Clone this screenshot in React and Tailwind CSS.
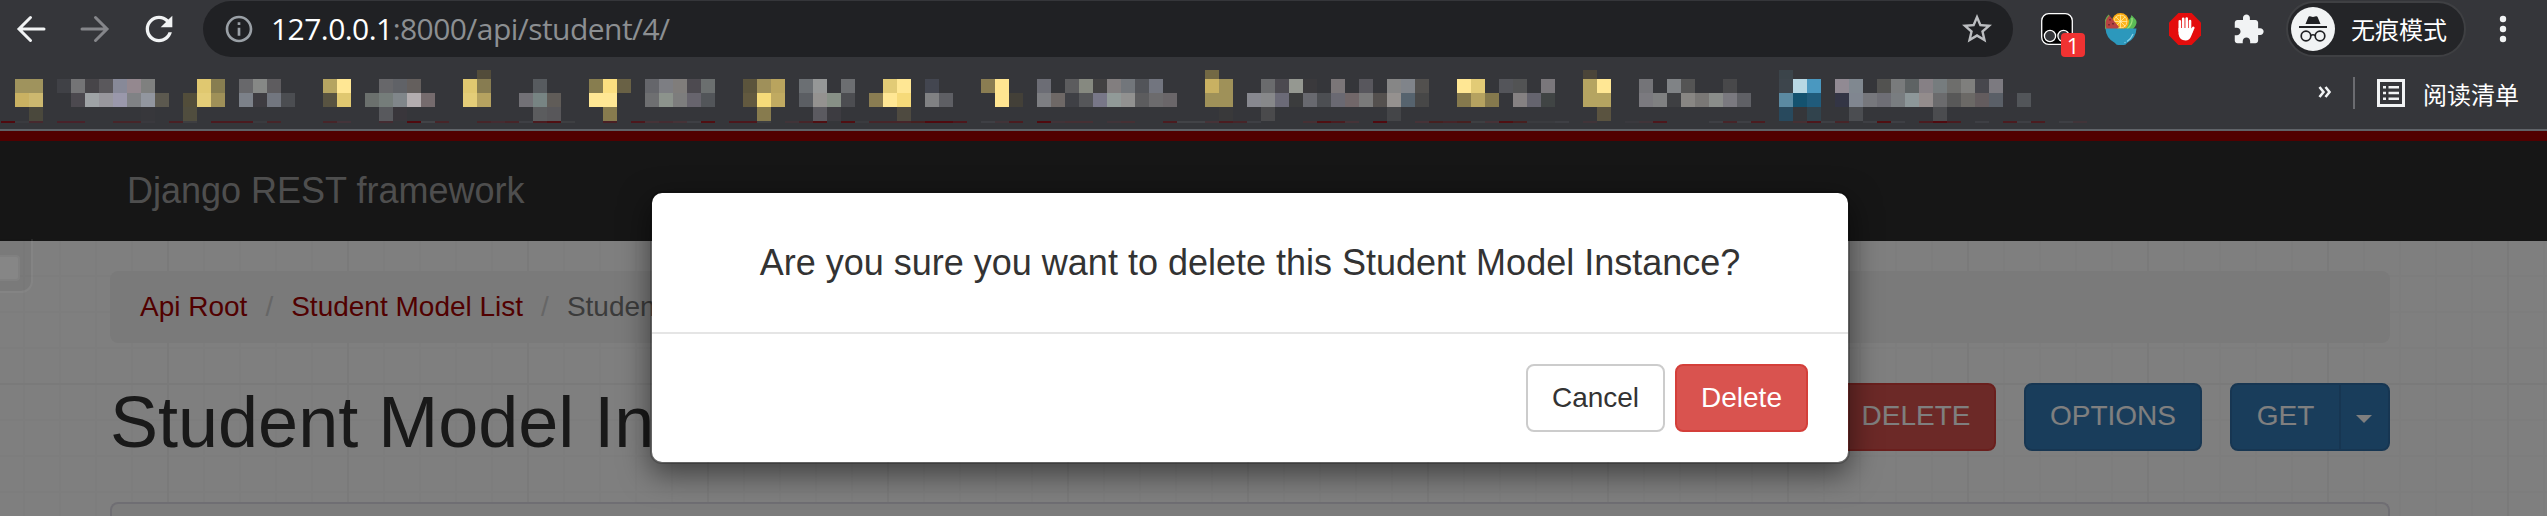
import React from "react";

const CELL = 14;

// Each row: [y, height, "index color color ... ; index color ..."] ("-" leaves a cell empty)
const MOSAIC = [
  [0, 9, "34 524c3a;86 736944;113 4b4539;127 3b444a"],
  [
    9,
    14,
    "1 9f935d 9f935d;4 404146 747476 474549 5a585c 878998 94888f 7f807f;14 e0c870 877d50;17 68686b 868886 5e5c5f;23 b5a461 ffe794;27 67676a 606267 645f5d;33 e0c870 877c51;38 575b5f;42 877d4f fbdf80 696145;46 65666b 7d7e83 807d7b 4d4a50 6b6f6f;53 5b543c 9f905a b9a45e;57 6b6f73 959797 - 6c6e71;63 e2cb76 ffe794 - 434650;70 8a7d52 ffe591;74 6c6d75 - 5c5c5e 868980 424142 827e7f 72767b 525459 72757f;86 c9b162 9f9159;90 6a6b6d 4c4a50 959891 3a393c - 7b7678 - 58575d - 868686 80848a 52504e;104 ffe794 e2cb76 - 54555a 525354 - 7a777b;113 b5a461 ffe794;117 747478 - 808386 545454;123 48484a;127 3d454c b8d8e4 4a98c0 - 918a93 808890 - 525250 797b7c 5e6364 868085 767c7e 6e6e6c 7f7f7d 47474d 7c7a80",
  ],
  [
    23,
    14,
    "1 c9b162 ccb86f;5 4c494f 9fa3a6 98979d 9a98ab 808285 92969f 5c594f;13 524d3a e4cd78 9f9058;17 7c8189 3e3c41 72767f 4b4d51;23 585341 e0c870;26 6b706d 757d7a 80868a b3adaf 756b6d;33 e4cd78 b5a260;37 727176 778483 605c58;42 ffe794 ffe794;46 6e6f71 8c938c 7d7d7d 67646d 525559;53 62593f f6db79 c0aa61;57 5b5e63 949290 879086 4c4d51;62 8a7d52 ffe794 f6da79 - 808183 5e5f64;71 ffe591 434038;74 7d7e82 6e6866 3f4045 555659 787788 919a98 919190 5c5c5e 6c6b6d 6a6669;86 9f9159 9f9159;89 87888f 87888a 6b6a77 3b3c3d 68696f 4c4e52 6a6972 716769 7a7a7a 54504e 95918f 56636e 474747;104 85794d b5a260 85794d - 858182 65646e 404444;113 b5a461 b5a461;117 7b7a7f 7f8081 3e3f42 888683 797775 8a8d8a 7a797f 5f6065;127 5b8aa2 14526f 205b7b - 333545 808690 76777c 6e6e75 797d80 8d9799 938c8c 6b6b6d 585858 6b6966 635c5e 5a5f67 36363b 525559",
  ],
  [
    37,
    14,
    "2 4a483c;10 37373b;13 504d3e;27 58595d 39363b;38 5b5c5e 58575a;43 877b4e;54 877b4e;58 5b5a60 3d3c41;64 4e4a40;87 39393a;90 4a4a4c;99 444548;114 5a5340;127 28495d - 31434d;132 4b4d51;138 4b4c4f",
  ],
  [
    51,
    2,
    "0 500a0f 3a3b3f 47292e - 49222a 49222a;8 472529 472529 3a393e;12 4a2024 3e3e41 - 4b1a1f 4b1a1f 4b1a1f 3a3b3f 472529;23 472529 44343a;27 452c32 - 500a0f 424347 472529;34 472529 452c32 472529 3e3f44 4b1c20 500f12 3e3f42;43 4a2024 - 4d171c 463338 452c32 463338 3e3f44 500f12;52 4d171c 4d171c 3e3f42 - 413439 472529 500f12 - 500f12 3a3b3f 472529 472529 472529 472020 500a0f 500a0f 4d171c;70 3e3f44 413439 4b1c20 - 500a0f 413439 463034 463034 - 413439 463034;83 4b1c20 424347 424347 463338 4b1c20 472529 3e3f44;93 463034 500f12 4b1c20 463338 - 500a0f;101 463338 472020 472529 472020 3e3f42 463338 500f12 472020 3a3b3f 3a3b3f 3e3f44 - 413439;116 3a393e 413439 4d171c;122 3e3f44 472529 3e3f44 4b1c20;128 463034 4d171c 3e3f44 472529 - 3e3f44 500f12 3e3f44 - 4b1c20 500a0f 4b1c20 - 3e3f44 - 4b1c20 3e3f44 4b1c20 - 3e3f44 413439",
  ],
];

function expand(spec) {
  return spec.split(";").flatMap((run) => {
    const [start, ...colors] = run.split(" ");
    return colors.map((c, i) => [Number(start) + i, c]).filter(([, c]) => c !== "-");
  });
}

function BlurredBookmarks() {
  return (
    <svg width="2100" height="53" className="ml-px mt-[13px] shrink-0" shapeRendering="crispEdges" aria-hidden="true">
      {MOSAIC.map(([y, h, spec]) =>
        expand(spec).map(([k, color]) => (
          <rect key={`${y}-${k}`} x={k * CELL} y={y} width={CELL} height={h} fill={`#${color}`} />
        ))
      )}
    </svg>
  );
}

function Icon({ d, size, className }) {
  return (
    <svg viewBox="0 0 24 24" width={size} height={size} fill="currentColor" className={`shrink-0 ${className || ""}`}>
      <path d={d} />
    </svg>
  );
}

const REFRESH =
  "M17.65 6.35C16.2 4.9 14.21 4 12 4c-4.42 0-7.99 3.58-7.99 8s3.57 8 7.99 8c3.73 0 6.84-2.55 7.73-6h-2.08c-.82 2.33-3.04 4-5.65 4-3.31 0-6-2.69-6-6s2.69-6 6-6c1.66 0 3.14.69 4.22 1.78L13 11h7V4l-2.35 2.35z";
const INFO =
  "M11 7h2v2h-2zm0 4h2v6h-2zm1-9C6.48 2 2 6.48 2 12s4.48 10 10 10 10-4.48 10-10S17.52 2 12 2zm0 18c-4.41 0-8-3.59-8-8s3.59-8 8-8 8 3.59 8 8-3.59 8-8 8z";
const STAR =
  "M22 9.24l-7.19-.62L12 2 9.19 8.63 2 9.24l5.46 4.73L5.82 21 12 17.27 18.18 21l-1.63-7.03L22 9.24zM12 15.4l-3.76 2.27 1-4.28-3.32-2.88 4.38-.38L12 6.1l1.71 4.04 4.38.38-3.32 2.88 1 4.28L12 15.4z";
const PUZZLE =
  "M20.5 11H19V7c0-1.1-.9-2-2-2h-4V3.5C13 2.12 11.88 1 10.5 1S8 2.12 8 3.5V5H4c-1.1 0-1.99.9-1.99 2v3.8H3.5c1.49 0 2.7 1.21 2.7 2.7s-1.21 2.7-2.7 2.7H2V20c0 1.1.9 2 2 2h3.8v-1.5c0-1.49 1.21-2.7 2.7-2.7 1.49 0 2.7 1.21 2.7 2.7V22H17c1.1 0 2-.9 2-2v-4h1.5c1.38 0 2.5-1.12 2.5-2.5S21.88 11 20.5 11z";

function Arrow({ flip, className }) {
  return (
    <svg width="40" height="40" viewBox="0 0 40 40" fill="none" stroke="currentColor" strokeWidth="3" className={`shrink-0 ${className || ""}`}>
      <path d={flip ? "M7 20h24.5M20.5 8.5L32 20L20.5 31.5" : "M33 20H8.500M19.500 8.500L8 20L19.500 31.500"} strokeLinecap="round" />
    </svg>
  );
}

function ScriptExtension() {
  return (
    <div className="relative ml-7 h-8 w-11 shrink-0">
      <svg width="32" height="32" viewBox="0 0 32 32">
        <rect x="0.700" y="0.700" width="30.600" height="30.600" rx="7" fill="#000" stroke="#fff" strokeWidth="1.300" />
        <circle cx="9" cy="23" r="5.600" fill="#35363a" stroke="#fff" strokeWidth="1.300" />
        <circle cx="22.500" cy="23" r="5.600" fill="#35363a" stroke="#fff" strokeWidth="1.300" />
      </svg>
      <div className="absolute left-[20px] top-[20px] flex h-6 w-6 items-center justify-center rounded bg-[#f03232] font-['Open_Sans',sans-serif] text-[22px] leading-6 text-white">
        1
      </div>
    </div>
  );
}

function SaladIcon() {
  return (
    <svg width="32" height="32" viewBox="0 0 32 32" className="ml-5 shrink-0">
      <path d="M26.500 2L31 7Q33 11 28 16H20V10Q26 6 26.500 2Z" fill="#5aba55" />
      <path d="M27 5Q28 11 22 16" fill="none" stroke="#9be07c" strokeWidth="1.300" />
      <circle cx="15.500" cy="8.500" r="8.500" fill="#fbaa12" />
      <circle cx="15.500" cy="8.500" r="6.800" fill="#fff0b8" />
      <circle cx="15.500" cy="8.500" r="6.200" fill="#fdb51d" />
      <path d="M15.500 2v13M9 8.500h13M11 4l9 9M20 4l-9 9" stroke="#fff0b8" strokeWidth="0.700" />
      <path d="M4 2L14 14L12 16H1Q-2 8 4 2Z" fill="#b64242" />
      <path d="M4 2Q-2 8 1 16" fill="none" stroke="#6fa34b" strokeWidth="1.200" />
      <path d="M5 6v1.500M8 10v1.500M4 11v1.500" stroke="#4c2020" strokeWidth="1.200" />
      <path d="M0.500 15.500H31.500Q31 25.500 22 30Q21 32 19 32H13Q11 32 10 30Q1 25.500 0.500 15.500Z" fill="#2c98bc" />
      <path d="M28 21Q26 26 22 28.500M20.500 29.300l-1 .5" fill="none" stroke="#8fd4ea" strokeWidth="1.200" />
    </svg>
  );
}

function StopHand() {
  return (
    <svg width="32" height="32" viewBox="0 0 32 32" className="ml-8 shrink-0">
      <path d="M9.400 0H22.600L32 9.400V22.600L22.600 32H9.400L0 22.600V9.400Z" fill="#e40d0d" />
      <g fill="none" stroke="#fff" strokeWidth="2.600" strokeLinecap="round">
        <path d="M10.800 8.300V18M14.200 5.800V17M17.700 5.600V17M21 8V18" />
        <path d="M24.300 14.800L21.500 20" />
      </g>
      <path d="M9.500 15H22.300L24.500 17.500L22 23.500Q20.500 27.500 16.500 27.500Q10.500 27.500 9.500 21Z" fill="#fff" />
    </svg>
  );
}

function IncognitoBadge() {
  return (
    <svg width="44" height="44" viewBox="0 0 44 44" className="shrink-0">
      <circle cx="22" cy="22" r="22" fill="#f1f3f4" />
      <path d="M14.500 17L17.300 10.200Q17.800 9 19 9.300L22 10L25 9.300Q26.200 9 26.700 10.200L29.500 17Z" fill="#202124" />
      <path d="M8 20H36" stroke="#202124" strokeWidth="2" />
      <g fill="none" stroke="#202124" strokeWidth="1.700">
        <circle cx="15" cy="29" r="4.800" />
        <circle cx="29" cy="29" r="4.800" />
        <path d="M19.800 28.500Q22 27 24.200 28.500" />
      </g>
    </svg>
  );
}

function BrowserToolbar() {
  return (
    <div className="flex h-[57px] items-center pt-px pl-[11px] text-[#f1f3f4]">
      <Arrow />
      <Arrow flip className="ml-6 text-[#85868a]" />
      <Icon d={REFRESH} size={40} className="ml-6" />
      <div className="ml-6 flex h-14 w-[1810px] shrink-0 items-center rounded-full bg-[#202124] pr-[18px] pl-5">
        <Icon d={INFO} size={32} className="text-[#9aa0a6]" />
        <div className="ml-4 flex-1 whitespace-nowrap font-['Open_Sans',sans-serif] text-[30px] leading-9 tracking-[-0.55px] text-[#8c8f92]">
          <span className="text-white">127.0.0.1</span>:8000/api/student/4/
        </div>
        <Icon d={STAR} size={36} className="text-[#bcbec1]" />
      </div>
      <ScriptExtension />
      <SaladIcon />
      <StopHand />
      <Icon d={PUZZLE} size={33} className="ml-[31px]" />
      <div className="ml-[21px] flex h-14 w-[180px] shrink-0 items-center rounded-full border-2 border-[#3f4043] bg-[#242528] pl-[3px]">
        <IncognitoBadge />
        <span className="ml-4 whitespace-nowrap font-['Noto_Sans_CJK_SC',sans-serif] text-[24px] leading-8 text-white">无痕模式</span>
      </div>
      <svg width="34" height="32" viewBox="0 0 34 32" className="ml-5 shrink-0" fill="currentColor">
        <circle cx="17" cy="6" r="3.200" />
        <circle cx="17" cy="16" r="3.200" />
        <circle cx="17" cy="26" r="3.200" />
      </svg>
    </div>
  );
}

function BookmarksBar() {
  return (
    <div className="flex h-[74px] shrink-0 border-b-2 border-[#5f6368] text-[#f1f3f4]">
      <BlurredBookmarks />
      <svg width="16" height="14" viewBox="0 0 16 14" className="mt-[28px] ml-[216px] shrink-0" fill="none" stroke="currentColor" strokeWidth="2.600">
        <path d="M2.500 2L6.500 7L2.500 12M8.500 2L12.500 7L8.500 12" />
      </svg>
      <div className="mt-5 ml-5 h-8 w-0.5 shrink-0 bg-[#6b6c70]" />
      <svg width="28" height="28" viewBox="0 0 28 28" className="mt-[22px] ml-[22px] shrink-0" fill="none" stroke="currentColor" strokeWidth="3">
        <rect x="1.500" y="1.500" width="25" height="25" />
        <path d="M6 8.200h3M6 14h3M6 19.800h3M11.500 8.200H22M11.500 14H22M11.500 19.800H22" strokeWidth="2.600" />
      </svg>
      <span className="mt-[21px] ml-[18px] whitespace-nowrap font-['Noto_Sans_CJK_SC',sans-serif] text-[24px] leading-8 text-white">阅读清单</span>
    </div>
  );
}

function GridPattern() {
  return (
    <svg className="absolute inset-0 h-full w-full" aria-hidden="true">
      <defs>
        <pattern id="minor" width="36" height="36" patternUnits="userSpaceOnUse" x="23" y="34">
          <path d="M1 0V36M0 1H36" stroke="#fafafa" strokeWidth="2" />
        </pattern>
        <pattern id="major" width="180" height="180" patternUnits="userSpaceOnUse" x="167" y="142">
          <path d="M1 0V180M0 1H180" stroke="#f4f4f4" strokeWidth="2" />
        </pattern>
      </defs>
      <rect width="100%" height="100%" fill="url(#minor)" />
      <rect width="100%" height="100%" fill="url(#major)" />
    </svg>
  );
}

function ApiPage() {
  return (
    <div className="flex flex-1 flex-col font-['Liberation_Sans',Arial,sans-serif]">
      <div className="flex h-[110px] shrink-0 items-center border-t-10 border-[#a30000] bg-[#2c2c2c] pl-[127px]">
        <span className="text-[36px] leading-10 text-[#9d9d9d]">Django REST framework</span>
      </div>
      <div className="relative flex-1 overflow-hidden bg-white">
        <GridPattern />
        <div className="relative ml-[110px] w-[2280px] pt-[30px]">
          <div className="flex h-[72px] items-center rounded-lg bg-[#f5f5f5] pl-[30px] text-[28px] leading-10 whitespace-nowrap">
            <span className="text-[#a30000]">Api Root</span>
            <span className="px-[18px] text-[#ccc]">/</span>
            <span className="text-[#a30000]">Student Model List</span>
            <span className="px-[18px] text-[#ccc]">/</span>
            <span className="text-[#777]">Student Model Instance</span>
          </div>
          <div className="mt-10 flex h-[79px] items-start">
            <h1 className="flex-1 whitespace-nowrap text-[72px] leading-[79px] text-[#333]">Student Model Instance</h1>
            <div className="flex text-[28px] leading-[62px] text-white">
              <div className="h-[68px] w-[160px] rounded-lg border-2 border-[#d43f3a] bg-[#d9534f] text-center">DELETE</div>
              <div className="ml-7 h-[68px] w-[178px] rounded-lg border-2 border-[#2e6da4] bg-[#337ab7] text-center">OPTIONS</div>
              <div className="ml-7 flex h-[68px] w-[160px] rounded-lg border-2 border-[#2e6da4] bg-[#337ab7]">
                <div className="w-[109px] border-r-2 border-[#2e6da4] text-center">GET</div>
                <svg width="16" height="8" viewBox="0 0 16 8" className="mt-[30px] ml-[15px]">
                  <path d="M0 0H16L8 8Z" fill="#fff" />
                </svg>
              </div>
            </div>
          </div>
          <div className="mt-10 h-10 rounded-t-lg border-2 border-b-0 border-[#dfdce6] bg-[#f8f8f8]" />
        </div>
      </div>
    </div>
  );
}

function ConfirmDialog() {
  return (
    <div className="absolute top-[191px] left-[650px] flex h-[273px] w-[1200px] flex-col rounded-xl border-2 border-black/20 bg-white bg-clip-padding font-['Liberation_Sans',Arial,sans-serif] text-[#333] shadow-[0_10px_30px_rgba(0,0,0,0.5)]">
      <div className="flex h-[139px] shrink-0 items-center justify-center">
        <h4 className="whitespace-nowrap text-[36px] leading-10">Are you sure you want to delete this Student Model Instance?</h4>
      </div>
      <div className="flex flex-1 justify-end gap-2.5 border-t-2 border-[#e5e5e5] pt-[30px] pr-10 text-[28px]">
        <button className="h-[68px] w-[139px] rounded-lg border-2 border-[#ccc] bg-white leading-[60px]">Cancel</button>
        <button className="h-[68px] w-[133px] rounded-lg border-2 border-[#d43f3a] bg-[#d9534f] leading-[60px] text-white">Delete</button>
      </div>
    </div>
  );
}

function EdgeHandle() {
  return (
    <div className="absolute top-[239px] left-0 flex h-[54px] w-[33px] items-center rounded-br-xl border-r-2 border-b-2 border-white/8 bg-black/4">
      <div className="mt-1.5 h-[26px] w-5 rounded-r border-2 border-l-0 border-[#808080] bg-[#868686]" />
    </div>
  );
}

export default function App() {
  return (
    <div className="relative flex h-[516px] w-full flex-col overflow-hidden bg-[#35363a]">
      <BrowserToolbar />
      <BookmarksBar />
      <div className="relative flex min-h-0 flex-1">
        <ApiPage />
        <div className="absolute inset-0 bg-black/50" />
      </div>
      <EdgeHandle />
      <ConfirmDialog />
    </div>
  );
}
